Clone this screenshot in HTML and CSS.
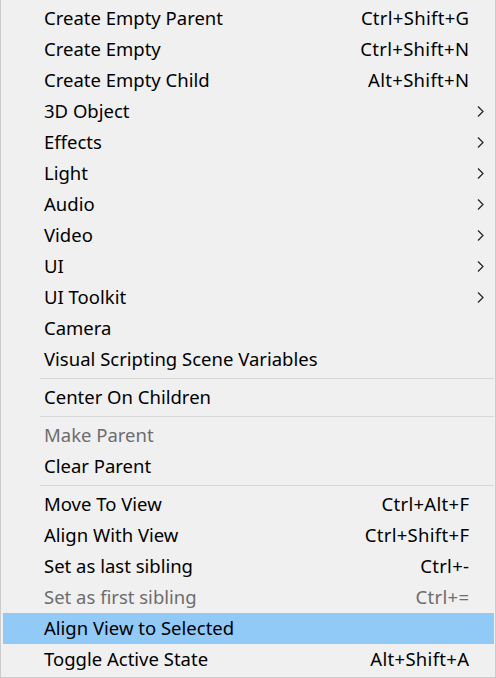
FILE: index.html
```html
<!DOCTYPE html>
<html>
<head>
<meta charset="utf-8">
<link rel="stylesheet" href="styles.css">
</head>
<body>
<div class="menu">
  <div class="item"><span class="label">Create Empty Parent</span><span class="key">Ctrl+Shift+G</span></div>
  <div class="item"><span class="label">Create Empty</span><span class="key">Ctrl+Shift+N</span></div>
  <div class="item"><span class="label">Create Empty Child</span><span class="key">Alt+Shift+N</span></div>
  <div class="item sub"><span class="label">3D Object</span><svg class="arrow" viewBox="0 0 7 11" width="7" height="11"><path d="M1 0.5 L6 5.5 L1 10.5" fill="none" stroke="#222" stroke-width="1.2"/></svg></div>
  <div class="item sub"><span class="label">Effects</span><svg class="arrow" viewBox="0 0 7 11" width="7" height="11"><path d="M1 0.5 L6 5.5 L1 10.5" fill="none" stroke="#222" stroke-width="1.2"/></svg></div>
  <div class="item sub"><span class="label">Light</span><svg class="arrow" viewBox="0 0 7 11" width="7" height="11"><path d="M1 0.5 L6 5.5 L1 10.5" fill="none" stroke="#222" stroke-width="1.2"/></svg></div>
  <div class="item sub"><span class="label">Audio</span><svg class="arrow" viewBox="0 0 7 11" width="7" height="11"><path d="M1 0.5 L6 5.5 L1 10.5" fill="none" stroke="#222" stroke-width="1.2"/></svg></div>
  <div class="item sub"><span class="label">Video</span><svg class="arrow" viewBox="0 0 7 11" width="7" height="11"><path d="M1 0.5 L6 5.5 L1 10.5" fill="none" stroke="#222" stroke-width="1.2"/></svg></div>
  <div class="item sub"><span class="label">UI</span><svg class="arrow" viewBox="0 0 7 11" width="7" height="11"><path d="M1 0.5 L6 5.5 L1 10.5" fill="none" stroke="#222" stroke-width="1.2"/></svg></div>
  <div class="item sub"><span class="label">UI Toolkit</span><svg class="arrow" viewBox="0 0 7 11" width="7" height="11"><path d="M1 0.5 L6 5.5 L1 10.5" fill="none" stroke="#222" stroke-width="1.2"/></svg></div>
  <div class="item"><span class="label">Camera</span></div>
  <div class="item"><span class="label">Visual Scripting Scene Variables</span></div>
  <div class="sep"></div>
  <div class="item"><span class="label">Center On Children</span></div>
  <div class="sep"></div>
  <div class="item disabled"><span class="label">Make Parent</span></div>
  <div class="item"><span class="label">Clear Parent</span></div>
  <div class="sep"></div>
  <div class="item"><span class="label">Move To View</span><span class="key">Ctrl+Alt+F</span></div>
  <div class="item"><span class="label">Align With View</span><span class="key">Ctrl+Shift+F</span></div>
  <div class="item"><span class="label">Set as last sibling</span><span class="key">Ctrl+-</span></div>
  <div class="item disabled"><span class="label">Set as first sibling</span><span class="key">Ctrl+=</span></div>
  <div class="item active"><span class="label">Align View to Selected</span></div>
  <div class="item"><span class="label">Toggle Active State</span><span class="key">Alt+Shift+A</span></div>
</div>
</body>
</html>
```
FILE: styles.css
```css
html, body {
  margin: 0;
  padding: 0;
  background: #f0f0f0;
}
.menu {
  box-sizing: border-box;
  width: 496px;
  height: 678px;
  background: #f0f0f0;
  border: 1px solid #cccccc;
  border-top: none;
  padding: 3px 1px 2px 2px;
  font-family: "Noto Sans", "Open Sans", sans-serif;
  font-size: 18.5px;
  line-height: 25px;
  color: #000;
}
.item {
  box-sizing: border-box;
  height: 31px;
  display: flex;
  align-items: center;
  padding: 0 25px 2px 41px;
  white-space: nowrap;
}
.item .label {
  flex: 1;
}
.item .key {
  letter-spacing: 0.3px;
  margin-right: -0.3px;
}
.item.sub {
  padding-right: 10px;
}
.arrow {
  display: block;
  margin-top: 2px;
}
.item.disabled {
  color: #6d6d6d;
}
.item.active {
  background: #91c9f7;
}
.sep {
  height: 7px;
  display: flex;
  align-items: center;
  padding-left: 37px;
}
.sep::after {
  content: "";
  display: block;
  flex: 1;
  height: 1px;
  background: #d7d7d7;
}
```
